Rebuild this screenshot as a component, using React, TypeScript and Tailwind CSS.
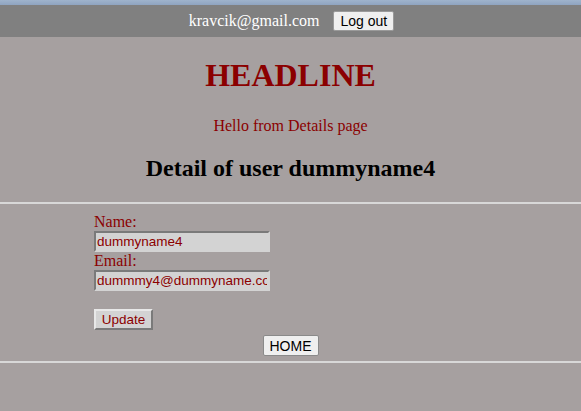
import React from "react";

export default function App() {
  const serif = { fontFamily: '"Liberation Serif", "Times New Roman", serif' } as React.CSSProperties;
  const inputCls =
    "h-[21px] w-[176px] border-2 border-t-[#7a7a7a] border-l-[#7a7a7a] border-r-[#d3d3d3] border-b-[#d3d3d3] bg-[#d3d3d3] px-[1px] font-['Liberation_Sans',Arial,sans-serif] text-[13.5px] text-[#8b0000] outline-none";
  return (
    <div className="min-h-[411px] w-full bg-[#a6a0a0] leading-[normal]" style={serif}>
      <div className="h-[5px] bg-gradient-to-b from-[#9fb3cc] to-[#8fa4c0]" />
      <div className="flex h-[32px] items-center justify-center gap-[14px] bg-[#808080] pl-[2px]">
        <span className="text-[16px] text-white">kravcik@gmail.com</span>
        <button className="h-[20px] rounded-[2px] border border-[#9a9a9a] bg-[#efefef] px-[6px] font-['Liberation_Sans',Arial,sans-serif] text-[14px] leading-[18px] text-black">
          Log out
        </button>
      </div>
      <h1 className="mt-[20px] text-center text-[32px] font-bold text-[#8b0000]">HEADLINE</h1>
      <p className="mt-[23px] text-center text-[16px] text-[#8b0000]">Hello from Details page</p>
      <h2 className="mt-[20px] text-center text-[24px] font-bold text-black">Detail of user dummyname4</h2>
      <div className="mt-[20px] h-[2px] bg-[#d8d8d8]" />
      <form className="ml-[94px] mt-[9px] flex flex-col items-start" onSubmit={(e) => e.preventDefault()}>
        <label className="text-[16px] text-[#8b0000]">Name:</label>
        <input readOnly value="dummyname4" className={inputCls} />
        <label className="text-[16px] text-[#8b0000]">Email:</label>
        <input readOnly value="dummmy4@dummyname.com" className={inputCls} />
        <button
          type="submit"
          className="mt-[18px] h-[21px] w-[59px] border-2 border-t-[#e8e8e8] border-l-[#e8e8e8] border-r-[#7a7a7a] border-b-[#7a7a7a] bg-[#d3d3d3] font-['Liberation_Sans',Arial,sans-serif] text-[13.5px] text-[#8b0000]"
        >
          Update
        </button>
      </form>
      <div className="mt-[5px] flex justify-center">
        <button className="h-[21px] w-[56px] rounded-[2px] border border-[#8a8a8a] bg-[#efefef] font-['Liberation_Sans',Arial,sans-serif] text-[14px] text-black">
          HOME
        </button>
      </div>
      <div className="mt-[5px] h-[2px] bg-[#d8d8d8]" />
    </div>
  );
}
